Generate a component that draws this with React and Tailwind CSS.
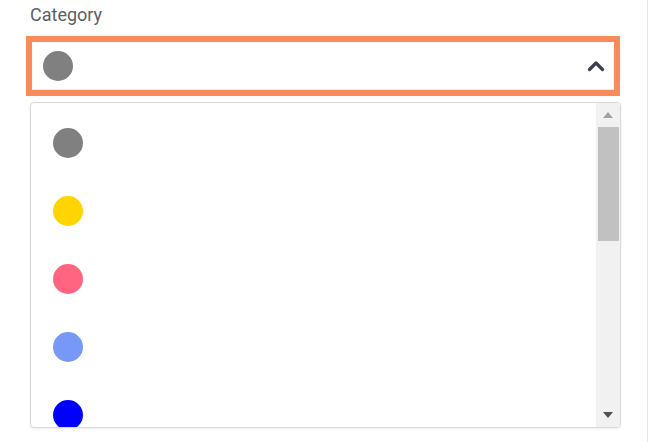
import React from 'react';

const options = [
  { id: 'gray', color: '#808080' },
  { id: 'yellow', color: '#ffd400' },
  { id: 'pink', color: '#ff6581' },
  { id: 'periwinkle', color: '#7898f8' },
  { id: 'blue', color: '#0000ff' },
];

function Dot({ color }) {
  return <span className="block w-[30px] h-[30px] rounded-full shrink-0" style={{ backgroundColor: color }} />;
}

export default function App() {
  return (
    <div className="w-[650px] h-[442px] bg-white overflow-hidden font-['Roboto',_'Liberation_Sans',_sans-serif]">
      <div className="w-[648px] h-full border-r border-[#e6e6e6] pl-[26px] pr-[27px] pt-[3px]">
        {/* label */}
        <div className="pl-[4px] text-[18px] leading-[24px] text-[#5a5f66]">Category</div>

        {/* select trigger, open state */}
        <div className="mt-[9px] border-[6px] border-[#f78c5a] bg-white">
          <div className="h-[48px] flex items-center justify-between pl-[11px] pr-[9px] border-b border-[#ececec]">
            <Dot color="#808080" />
            <svg width="18" height="12" viewBox="0 0 18 12" fill="none">
              <path d="M2.5 9.5 L9 3 L15.5 9.5" stroke="#3a4150" strokeWidth="3.2" strokeLinecap="round" strokeLinejoin="round" />
            </svg>
          </div>
        </div>

        {/* dropdown list */}
        <div className="mt-[6px] ml-[4px] w-[591px] h-[326px] border border-[#dadada] rounded-[4px] shadow-[0_1px_3px_rgba(0,0,0,0.08)] flex overflow-hidden bg-white">
          <div className="flex-1 pt-[6px] pl-[22px]">
            {options.map(o => (
              <div key={o.id} className="h-[68px] flex items-center">
                <Dot color={o.color} />
              </div>
            ))}
          </div>

          {/* scrollbar */}
          <div className="w-[24px] bg-[#f1f1f1] flex flex-col items-center">
            <div className="h-[24px] flex items-center justify-center">
              <svg width="10" height="6" viewBox="0 0 10 6"><path d="M0 6 L5 0 L10 6 Z" fill="#a3a3a3" /></svg>
            </div>
            <div className="w-[21px] h-[114px] bg-[#c1c1c1]" />
            <div className="flex-1" />
            <div className="h-[24px] flex items-center justify-center">
              <svg width="10" height="6" viewBox="0 0 10 6"><path d="M0 0 L10 0 L5 6 Z" fill="#505050" /></svg>
            </div>
          </div>
        </div>
      </div>
    </div>
  );
}
